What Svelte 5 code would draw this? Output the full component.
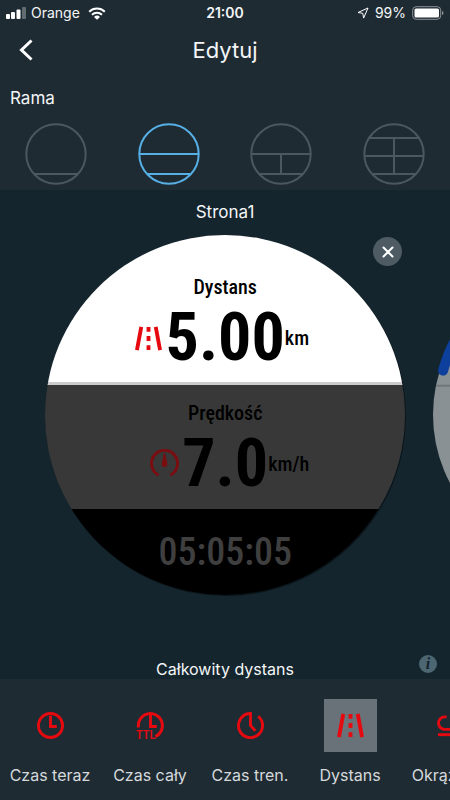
<script>
    const frames = [
        { id: 'one', label: 'Jedno pole', path: 'M10 51H52' },
        { id: 'two', label: 'Dwa pola', path: 'M1 31H61M10 51H52' },
        { id: 'three', label: 'Trzy pola', path: 'M1 31H61M10 51H52M31 31V51' },
        { id: 'five', label: 'Cztery pola', path: 'M6 15H56M1 33H61M10 51H52M31 15V51' }
    ];

    const metrics = [
        { id: 'now', label: 'Czas teraz' },
        { id: 'total', label: 'Czas cały' },
        { id: 'training', label: 'Czas tren.' },
        { id: 'distance', label: 'Dystans' },
        { id: 'lap', label: 'Okrążenie' }
    ];

    let frame = $state('two');
    let metric = $state('distance');
</script>

{#snippet road()}
    <svg class="icon road" viewBox="0 0 28 28" aria-hidden="true">
        <path d="M6.500 2 2 26M21.500 2l4.500 24" />
        <path d="M14 2v5M14 11.500v5M14 21v5" />
    </svg>
{/snippet}

<div class="screen">
    <header>
        <div class="status">
            <div class="carrier">
                <svg width="21" height="12" viewBox="0 0 21 12" aria-hidden="true">
                    <rect x="0" y="7" width="4" height="5" rx="1" />
                    <rect x="5" y="5" width="4" height="7" rx="1" />
                    <rect x="10.500" y="2.500" width="4" height="9.500" rx="1" />
                    <rect x="16" y="0" width="4" height="12" rx="1" opacity=".3" />
                </svg>
                <span>Orange</span>
                <svg class="wifi" width="18" height="13" viewBox="0 0 18 13" aria-hidden="true">
                    <path d="M1.200 4.700a11.200 11.200 0 0 1 15.600 0M4 7.700a7.200 7.200 0 0 1 10 0" />
                    <path class="dot" d="M9 12.800 6 9.900a4.300 4.300 0 0 1 6 0z" />
                </svg>
            </div>
            <b>21:00</b>
            <div class="battery">
                <svg width="12" height="12" viewBox="0 0 12 12" aria-hidden="true">
                    <path class="arrow" d="M11 1 1 5.500l4.800.8.8 4.800z" />
                </svg>
                <span>99%</span>
                <svg width="32" height="14" viewBox="0 0 32 14" aria-hidden="true">
                    <rect class="case" x=".7" y=".7" width="28" height="12.600" rx="3.500" />
                    <rect x="2.500" y="2.500" width="24.500" height="9" rx="1.500" />
                    <path d="M30 5q1.500.5 1.500 2T30 9z" opacity=".5" />
                </svg>
            </div>
        </div>

        <nav>
            <button class="back" aria-label="Wstecz">
                <svg width="16" height="22" viewBox="0 0 16 22" aria-hidden="true">
                    <path d="M13.500 1.500 3.500 11l10 9.500" />
                </svg>
            </button>
            <h1>Edytuj</h1>
        </nav>

        <h2>Rama</h2>
        <div class="frames">
            {#each frames as f}
                <button
                    class="frame"
                    class:active={frame === f.id}
                    aria-label={f.label}
                    aria-pressed={frame === f.id}
                    onclick={() => (frame = f.id)}
                >
                    <svg width="62" height="62" viewBox="0 0 62 62" aria-hidden="true">
                        <circle cx="31" cy="31" r="29.700" />
                        <path d={f.path} />
                    </svg>
                </button>
            {/each}
        </div>
    </header>

    <main>
        <h3>Strona1</h3>
        <div class="pages">
            <div class="page">
                <div class="face">
                    <div class="field selected">
                        <div class="name">Dystans</div>
                        <div class="reading">
                            <div class="side left">{@render road()}</div>
                            <span class="value">5.00</span>
                            <span class="side">km</span>
                        </div>
                    </div>
                    <div class="field dimmed">
                        <div class="name">Prędkość</div>
                        <div class="reading">
                            <div class="side left">
                                <svg class="icon" viewBox="0 0 28 28" aria-hidden="true">
                                    <path d="M8 26A13.500 13.500 0 1 1 20 26" />
                                    <path class="needle" d="M13.500 3l-2.500 11.500a3 3 0 1 0 6 0L14.500 3z" />
                                </svg>
                            </div>
                            <span class="value">7.0</span>
                            <span class="side">km/h</span>
                        </div>
                    </div>
                    <div class="field clock">05:05:05</div>
                </div>
                <button class="close" aria-label="Usuń stronę">
                    <svg width="14" height="14" viewBox="0 0 14 14" aria-hidden="true">
                        <path d="M2.500 2.500l9 9M11.500 2.500l-9 9" />
                    </svg>
                </button>
            </div>
            <svg class="next" viewBox="0 0 290 290" aria-hidden="true">
                <circle cx="145" cy="145" r="145" />
                <path class="rule" d="M3 116H287" />
                <path class="arc" d="M10 101A140 140 0 0 1 280 101" />
            </svg>
        </div>
        <div class="caption">
            <p>Całkowity dystans</p>
            <button class="info" aria-label="Informacje">
                <svg width="18" height="18" viewBox="0 0 18 18" aria-hidden="true">
                    <circle cx="9" cy="9" r="9" />
                    <text x="9" y="14" text-anchor="middle">i</text>
                </svg>
            </button>
        </div>
    </main>

    <footer>
        {#each metrics as m}
            <button class="metric" aria-pressed={metric === m.id} onclick={() => (metric = m.id)}>
                <span class="tile" class:active={metric === m.id}>
                    {#if m.id === 'now'}
                        <svg class="icon" viewBox="0 0 28 28" aria-hidden="true">
                            <circle cx="14" cy="14" r="12.500" />
                            <path d="M14 4v11h6.500" />
                        </svg>
                    {:else if m.id === 'total'}
                        <svg class="icon" viewBox="0 0 28 28" aria-hidden="true">
                            <path d="M1.500 16A12.500 12.500 0 1 1 19 25.500" />
                            <path d="M14 2v13h6.500" />
                            <text x="-1" y="28">TTL</text>
                        </svg>
                    {:else if m.id === 'training'}
                        <svg class="icon" viewBox="0 0 28 28" aria-hidden="true">
                            <path d="M14 0v14l5 5.500" />
                            <path d="M14 1.500A12.500 12.500 0 1 0 22 4.400" />
                        </svg>
                    {:else if m.id === 'distance'}
                        {@render road()}
                    {:else}
                        <svg class="icon" viewBox="0 0 28 28" aria-hidden="true">
                            <path d="M10 5H8a6.500 6.500 0 0 0 0 13h12a6.500 6.500 0 0 0 0-13h-2" />
                            <path d="M1 23.500h26" />
                        </svg>
                    {/if}
                </span>
                <span>{m.label}</span>
            </button>
        {/each}
    </footer>
</div>

<style>
    :global(body) {
        margin: 0;
        background: #14252d;
    }

    .screen {
        display: flex;
        flex-direction: column;
        min-height: 100vh;
        overflow: hidden;
        background: #14252d;
        color: #f4f6f7;
        font-family: Inter, "Liberation Sans", sans-serif;
        font-size: 16px;
        line-height: 20px;
    }

    button {
        padding: 0;
        border: 0;
        background: none;
        color: inherit;
        font: inherit;
        cursor: pointer;
    }

    svg {
        display: block;
        flex: none;
    }

    h1, h2, h3, p {
        margin: 0;
        font-weight: 400;
    }

    header {
        background: #1f2b33;
        padding-bottom: 4px;
    }

    .status {
        display: grid;
        grid-template-columns: 1fr auto 1fr;
        align-items: center;
        height: 26px;
        padding: 0 6px;
        font-size: 14px;
        fill: #fff;
    }

    .status b {
        font-weight: 600;
    }

    .carrier, .battery {
        display: flex;
        align-items: center;
        gap: 4px;
    }

    .battery {
        justify-content: flex-end;
        gap: 6px;
    }

    .wifi {
        margin-left: 4px;
        fill: none;
        stroke: #fff;
        stroke-width: 2;
    }

    .dot {
        fill: #fff;
        stroke: none;
    }

    .arrow {
        fill: none;
        stroke: #fff;
        stroke-linejoin: round;
    }

    .case {
        fill: none;
        stroke: #8b9296;
    }

    nav {
        display: grid;
        grid-template-columns: 1fr auto 1fr;
        align-items: center;
        height: 48px;
        padding: 0 18px;
    }

    .back {
        justify-self: start;
    }

    .back svg {
        fill: none;
        stroke: #fff;
        stroke-width: 3;
    }

    h1 {
        font-size: 22px;
        line-height: 28px;
    }

    h2 {
        padding: 14px 10px;
        font-size: 17px;
    }

    .frames {
        display: grid;
        grid-template-columns: repeat(4, 1fr);
        justify-items: center;
        padding: 1px 0;
    }

    .frame svg {
        fill: none;
        stroke: #4b585f;
        stroke-width: 2;
    }

    .frame.active svg {
        stroke: #56b0e6;
    }

    main {
        display: flex;
        flex: 1;
        flex-direction: column;
    }

    h3 {
        padding: 12px 0 13px;
        font-size: 17px;
        text-align: center;
    }

    .pages {
        display: flex;
        align-items: center;
        gap: 28px;
        padding-left: 10%;
    }

    .page {
        position: relative;
        flex: none;
        width: 89%;
    }

    .face {
        display: grid;
        grid-template-rows: 149fr 124fr 86fr;
        aspect-ratio: 1;
        overflow: hidden;
        border-radius: 50%;
        box-shadow: 1px 1px 0 #0b151a;
        color: #000;
        font-family: "Liberation Sans Narrow", "Roboto Condensed", "DejaVu Sans Condensed", sans-serif;
    }

    .field {
        display: flex;
        flex-direction: column;
        align-items: center;
        min-height: 0;
    }

    .selected {
        box-sizing: border-box;
        padding-top: 40px;
        border-bottom: 3px solid #ccc;
        background: #fff;
    }

    .dimmed {
        padding-top: 16px;
        background: #383838;
    }

    .name {
        font-size: 20px;
        font-weight: 500;
        line-height: 24px;
    }

    .reading {
        display: grid;
        grid-template-columns: 1fr auto 1fr;
        align-items: center;
        width: 100%;
    }

    .value {
        font-size: 66px;
        font-weight: 700;
        line-height: 78px;
    }

    .side {
        font-size: 20px;
        font-weight: 500;
        line-height: 24px;
    }

    .left {
        justify-self: end;
        margin-right: 4px;
    }

    .clock {
        justify-content: center;
        background: #000;
        color: #3f3f3f;
        font-size: 38px;
        font-weight: 500;
        line-height: 48px;
    }

    .icon {
        width: 27px;
        height: 27px;
        overflow: visible;
        fill: none;
        stroke: #e60a10;
        stroke-width: 3;
    }

    .road {
        stroke-width: 4;
    }

    .icon text {
        fill: #e60a10;
        stroke: none;
        font-family: "Roboto Condensed", sans-serif;
        font-size: 13px;
        font-weight: 500;
    }

    .dimmed .icon {
        stroke: #7b0d10;
    }

    .dimmed .icon .needle {
        fill: #7b0d10;
        stroke: none;
    }

    .close {
        position: absolute;
        top: 2px;
        right: 3px;
        display: grid;
        place-items: center;
        width: 29px;
        height: 29px;
        border-radius: 50%;
        background: #4f5b62;
    }

    .close svg {
        fill: none;
        stroke: #fff;
        stroke-width: 2;
        stroke-linecap: round;
    }

    .next {
        width: 72%;
        fill: #8a9194;
    }

    .rule {
        stroke: #70777a;
        stroke-width: 2;
    }

    .arc {
        fill: none;
        stroke: #0c409c;
        stroke-width: 10;
        stroke-linecap: round;
    }

    .caption {
        display: grid;
        grid-template-columns: 1fr auto 1fr;
        height: 24px;
        margin-top: auto;
        padding: 0 13px;
    }

    .caption p {
        grid-column: 2;
        align-self: end;
    }

    .info {
        justify-self: end;
        align-self: start;
    }

    .info circle {
        fill: #4c6672;
    }

    .info text {
        fill: #14252d;
        font-family: "Liberation Serif", serif;
        font-size: 16px;
        font-style: italic;
        font-weight: 700;
    }

    footer {
        display: flex;
        padding: 20px 0 15px;
        background: #1f2b33;
    }

    .metric {
        display: flex;
        flex: 0 0 100px;
        flex-direction: column;
        align-items: center;
        gap: 13px;
        color: #d5d9dc;
    }

    .tile {
        display: grid;
        place-items: center;
        width: 53px;
        height: 53px;
    }

    .tile.active {
        background: #697278;
    }
</style>
